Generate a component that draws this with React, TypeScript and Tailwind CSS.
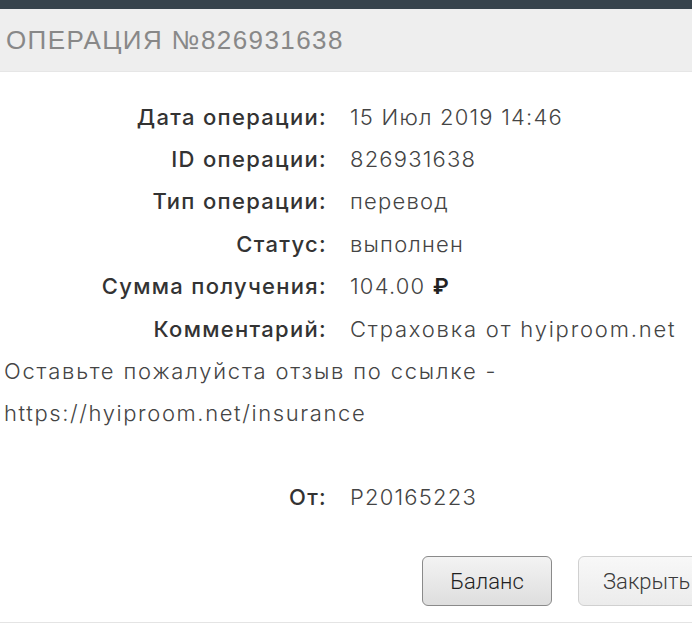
import React from 'react';

export default function App() {
  const rows = [
    { label: 'Дата операции:', value: <>15 Июл 2019 14:46</> },
    { label: 'ID операции:', value: <>826931638</> },
    { label: 'Тип операции:', value: <>перевод</> },
    { label: 'Статус:', value: <>выполнен</> },
    { label: 'Сумма получения:', value: <>104.00 <span className="font-semibold text-[#222222]">₽</span></> },
    { label: 'Комментарий:', value: <span className="tracking-[1.8px]">Страховка от hyiproom.net</span> },
  ];

  return (
    <div className="w-[692px] h-[625px] overflow-hidden bg-white font-['Inter',sans-serif]">
      {/* Top bar */}
      <div className="h-[9px] bg-[#37434c]" />

      {/* Title band */}
      <div className="h-[63px] bg-[#eeeeee] border-b border-[#e6e6e6] flex items-center pl-[6px]">
        <h1 className="font-['Liberation_Sans',sans-serif] text-[26px] tracking-[1.4px] text-[#888888] leading-none">
          ОПЕРАЦИЯ №826931638
        </h1>
      </div>

      {/* Details */}
      <div className="pt-[24px]">
        <div className="grid grid-cols-[327px_1fr] gap-x-[23px]">
          {rows.map((row) => (
            <React.Fragment key={row.label}>
              <div className="h-[42.4px] flex items-center justify-end text-[22px] font-medium tracking-[1.3px] text-[#333333] whitespace-nowrap">
                {row.label}
              </div>
              <div className="h-[42.4px] flex items-center text-[22px] font-light tracking-[1.2px] text-[#444444] whitespace-nowrap">
                <span>{row.value}</span>
              </div>
            </React.Fragment>
          ))}
        </div>

        <div className="pl-[4px] text-[22px] font-light tracking-[1.8px] text-[#444444] leading-[42px] whitespace-nowrap">
          <p>Оставьте пожалуйста отзыв по ссылке -</p>
          <p className="tracking-[1.6px]">https://hyiproom.net/insurance</p>
        </div>

        <div className="h-[42px]" />

        <div className="grid grid-cols-[327px_1fr] gap-x-[23px]">
          <div className="h-[42px] flex items-center justify-end text-[22px] font-medium tracking-[1.3px] text-[#333333]">От:</div>
          <div className="h-[42px] flex items-center text-[22px] font-light tracking-[1.2px] text-[#444444]">P20165223</div>
        </div>
      </div>

      {/* Buttons */}
      <div className="mt-[38px] flex gap-[26px] pl-[422px]">
        <button className="w-[130px] h-[50px] shrink-0 rounded-[6px] border border-[#8a8a8a] bg-gradient-to-b from-[#f3f3f3] to-[#dedede] font-['Roboto',sans-serif] font-light text-[22px] text-[#1f1f1f]">
          Баланс
        </button>
        <button className="w-[140px] h-[50px] shrink-0 rounded-[6px] border border-[#d0d0d0] bg-gradient-to-b from-[#f8f8f8] to-[#ececec] font-['Roboto',sans-serif] font-light text-[22px] text-[#3a3a3a] text-left pl-[24px]">
          Закрыть
        </button>
      </div>

      <div className="mt-[16px] border-t border-[#e4e4e4]" />
    </div>
  );
}
